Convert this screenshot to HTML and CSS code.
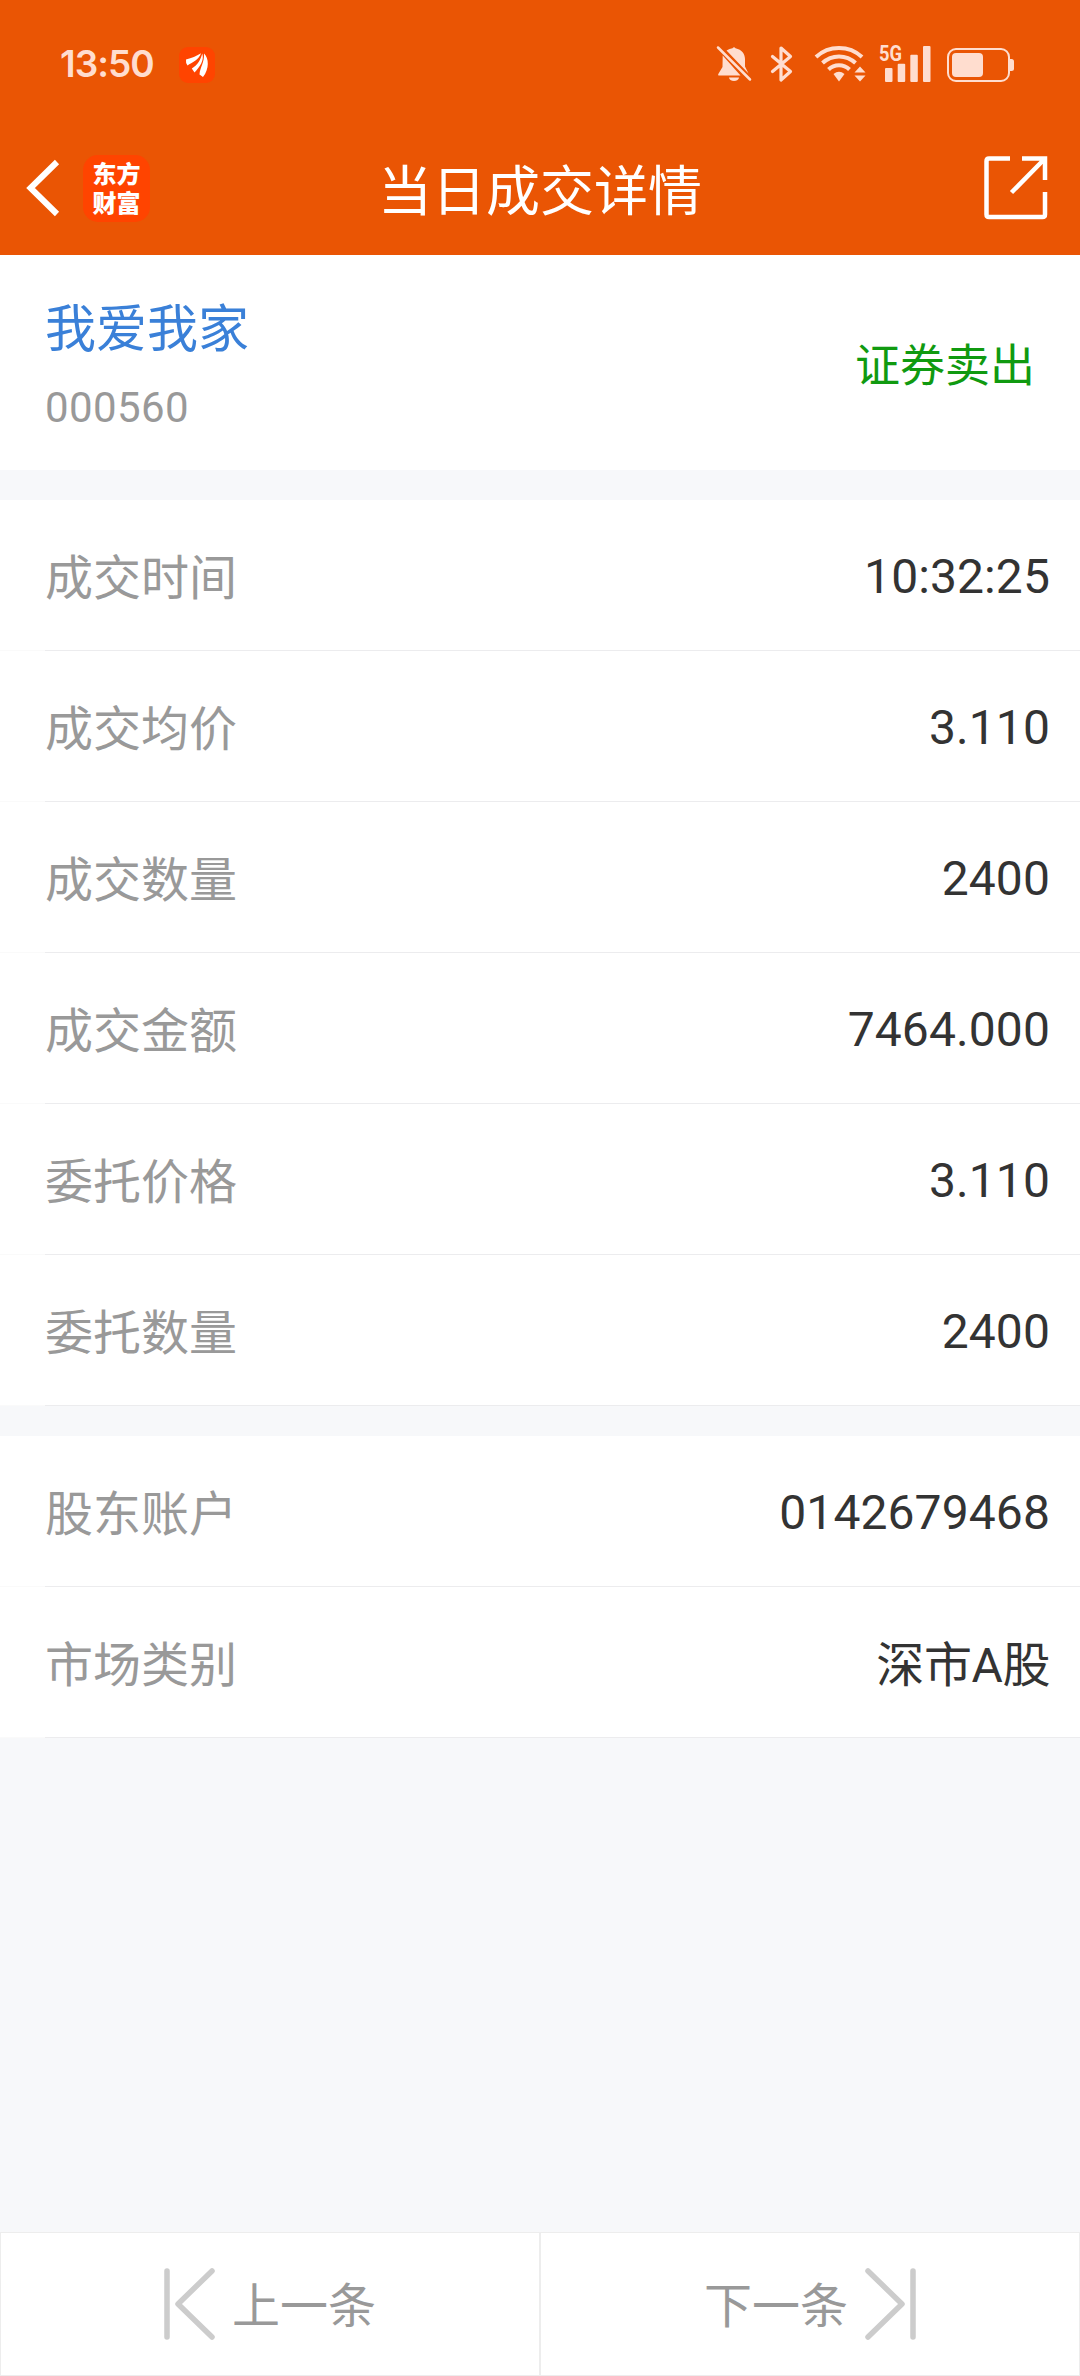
FILE: index.html
```html
<!DOCTYPE html>
<html lang="zh-CN">
<head>
<meta charset="utf-8">
<title>当日成交详情</title>
<link rel="stylesheet" href="styles.css">
</head>
<body>
<div class="screen">
  <header class="header">
    <div class="status">
      <span class="clock">13:50</span>
      <svg class="status-app" viewBox="0 0 36 36">
        <rect width="36" height="36" rx="9" fill="#ff4400"/>
        <g fill="#fff">
          <path d="M7 12.500C13 11 17 9.500 22 6.300C20 13 13 15.500 8.500 18.500Q6.500 16 7 12.500Z"/>
          <path d="M12.800 21.500C19 17.500 21.500 13 23.300 6.500C25.500 14 20.500 20 15.500 25.500Z"/>
          <path d="M20.500 27.500C21 20 25.500 16 25 6.500C30 11 30.500 22 24 30Z"/>
        </g>
      </svg>
      <svg class="status-icons" viewBox="0 0 302 44">
        <g fill="#ffddcf">
          <path d="M14.500 8.500Q17.500 6.500 20.500 6.200Q22 4.200 23.500 6.200C30 7.500 33 12 33 17V24.500L36.500 31.500ZM10.700 13.500L28.500 33.500H7Q5.500 33.500 6.300 32L10.500 25Z"/>
          <path d="M17 35.500H27a5 3.500 0 0 1-10 0Z"/>
          <path d="M121.500 32q5.500-4.500 11 0l-5.500 7.500Z"/>
          <path d="M148 24.500l5.500 6h-11ZM148 39.500l-5.500-6h11Z"/>
          <rect x="173" y="26" width="7.500" height="14" rx="1"/>
          <rect x="185.700" y="21.700" width="7.500" height="18.300" rx="1"/>
          <rect x="198.300" y="12.700" width="7.500" height="27.300" rx="1"/>
          <rect x="211" y="4" width="7.500" height="36" rx="1"/>
          <rect x="240" y="11" width="31" height="24" rx="4"/>
          <path d="M298 17h1.500q2.500 0 2.500 2.500v7q0 2.500-2.500 2.500H298Z"/>
          <text class="net" x="167" y="19" textLength="23" lengthAdjust="spacingAndGlyphs">5G</text>
        </g>
        <g fill="none" stroke="#ffddcf" stroke-linecap="round">
          <path stroke-width="2.500" d="M6 5.500L38 37.500"/>
          <path stroke-width="3.200" stroke-linejoin="round" d="M60.500 14.500L78.500 29.500L69 38V6L78.500 14.500L60.500 29.500"/>
          <path stroke-width="4" stroke-linecap="butt" d="M104 15A34 34 0 0 1 150 15M110.500 21A24 24 0 0 1 143.500 21M116.500 27.500A15 15 0 0 1 137.500 27.500"/>
          <rect x="236" y="7" width="61" height="32" rx="8" stroke-width="2"/>
        </g>
      </svg>
    </div>
    <div class="nav">
      <div class="nav-left">
        <svg class="back" viewBox="0 0 36 58" fill="none" stroke="#fff" stroke-width="6"><path d="M31 3L4.500 29L31 55"/></svg>
        <div class="brand"><span>东方</span><span>财富</span></div>
      </div>
      <h1 class="title">当日成交详情</h1>
      <svg class="share" viewBox="0 0 64 64" fill="none" stroke="#fff" stroke-width="4.500">
        <path d="M26 2.500H5Q2.500 2.500 2.500 5V58.500Q2.500 61 5 61H58.500Q61 61 61 58.500V36M38 2.500H61V24M61 2.500L27.500 36.500"/>
      </svg>
    </div>
  </header>
  <section class="summary">
    <div class="stock">
      <div class="name">我爱我家</div>
      <div class="code">000560</div>
    </div>
    <div class="side">证券卖出</div>
  </section>
  <section class="group">
    <div class="row"><span class="label">成交时间</span><span class="value">10:32:25</span></div>
    <div class="row"><span class="label">成交均价</span><span class="value">3.110</span></div>
    <div class="row"><span class="label">成交数量</span><span class="value">2400</span></div>
    <div class="row"><span class="label">成交金额</span><span class="value">7464.000</span></div>
    <div class="row"><span class="label">委托价格</span><span class="value">3.110</span></div>
    <div class="row"><span class="label">委托数量</span><span class="value">2400</span></div>
  </section>
  <section class="group">
    <div class="row"><span class="label">股东账户</span><span class="value">0142679468</span></div>
    <div class="row"><span class="label">市场类别</span><span class="value market">深市A股</span></div>
  </section>
  <footer class="pager">
    <div class="page-btn">
      <svg class="page-icon" viewBox="0 0 51 72"><path d="M3 3V69M48 3L14 36L48 69"/></svg>
      <span class="page-text">上一条</span>
    </div>
    <div class="page-btn">
      <span class="page-text">下一条</span>
      <svg class="page-icon" viewBox="0 0 51 72"><path d="M48 3V69M3 3L37 36L3 69"/></svg>
    </div>
  </footer>
</div>
</body>
</html>
```
FILE: styles.css
```css
* { box-sizing: border-box; }
body { margin: 0; font-family: Roboto, "Noto Sans CJK SC", sans-serif; background: #f7f8fa; }
svg { display: block; flex: none; }
.screen { width: 1080px; height: 2376px; display: flex; flex-direction: column; }
.header { height: 255px; background: #ea5504; color: #fff; }
.status { height: 128px; display: flex; align-items: center; padding: 0 66px 0 60px; }
.clock { font: 600 37px/40px Inter, sans-serif; letter-spacing: -1px; color: #ffddcf; width: 119px; }
.status-app { width: 36px; height: 36px; margin-top: 2px; }
.status-icons { width: 302px; height: 44px; margin-left: auto; }
.net { font: 700 22px Roboto, sans-serif; }
.nav { height: 127px; display: grid; grid-template-columns: 1fr auto 1fr; align-items: center; padding: 0 32px 7px 26px; }
.nav-left { display: flex; align-items: center; }
.back { width: 36px; height: 58px; }
.brand { width: 67px; height: 67px; margin-left: 21px; padding-bottom: 3px; border-radius: 15px; background: #ff4400; display: flex; flex-direction: column; align-items: center; justify-content: center; font: 900 24px/29px "Noto Sans CJK SC", sans-serif; }
.title { margin: 0; padding: 10px 0 0 6px; font-size: 54px; line-height: 64px; font-weight: 400; }
.share { width: 64px; height: 64px; justify-self: end; }
.summary { height: 215px; background: #fff; display: flex; align-items: center; justify-content: space-between; padding: 0 45px; }
.stock { padding-top: 10px; }
.name { font-size: 51px; line-height: 80px; color: #3a80d8; }
.code { font-size: 42px; line-height: 76px; color: #999; letter-spacing: .4px; }
.side { font-size: 45px; color: #109a10; }
.group { margin-top: 30px; background: #fff; }
.row { height: 151px; display: flex; align-items: center; justify-content: space-between; padding: 0 30px 0 45px; background: linear-gradient(90deg, #fafafa 45px, #ececee 45px) bottom / 100% 1px no-repeat; font-size: 48px; }
.label { color: #999; padding-bottom: 4px; }
.value { color: #333; letter-spacing: .1px; padding-top: 1px; }
.market { letter-spacing: -.4px; padding: 0 0 3px; }
.pager { height: 144px; margin-top: auto; display: grid; grid-template-columns: 1fr 1fr; }
.page-btn { background: #fff; border: 1px solid #ededed; display: flex; align-items: center; justify-content: center; gap: 17px; font-size: 48px; color: #999; }
.page-text { padding-bottom: 5px; }
.page-icon { width: 51px; height: 72px; fill: none; stroke: #ccc; stroke-width: 5.5px; stroke-linecap: round; stroke-linejoin: round; }
```
